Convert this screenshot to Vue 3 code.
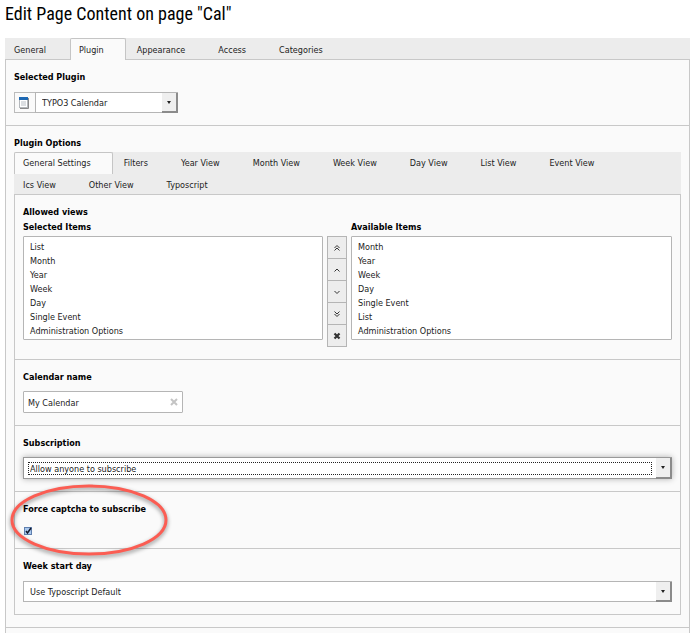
<script setup>
import { ref } from 'vue'

const tabs = ['General', 'Plugin', 'Appearance', 'Access', 'Categories']
const activeTab = ref('Plugin')

const optionTabs = [
  'General Settings', 'Filters', 'Year View', 'Month View', 'Week View', 'Day View',
  'List View', 'Event View', 'Ics View', 'Other View', 'Typoscript'
]
const activeOptionTab = ref('General Settings')

const selectedItems = ['List', 'Month', 'Year', 'Week', 'Day', 'Single Event', 'Administration Options']
const availableItems = ['Month', 'Year', 'Week', 'Day', 'Single Event', 'List', 'Administration Options']

const moves = [
  { label: 'Move to top', d: 'M2.5 5 5 2.5 7.5 5M2.5 7.5 5 5 7.5 7.5', width: 1 },
  { label: 'Move up', d: 'M2.5 6.5 5 4 7.5 6.5', width: 1 },
  { label: 'Move down', d: 'M2.5 4 5 6.5 7.5 4', width: 1 },
  { label: 'Move to bottom', d: 'M2.5 2.5 5 5 7.5 2.5M2.5 5 5 7.5 7.5 5', width: 1 },
  { label: 'Remove', d: 'M2.5 2.5 7.5 7.5M7.5 2.5 2.5 7.5', width: 2.2 }
]

const calendarName = ref('My Calendar')
const captcha = ref(true)
</script>

<template>
  <main class="page">
    <h1>Edit Page Content on page "Cal"</h1>

    <nav class="tabs">
      <button
        v-for="t in tabs" :key="t" type="button" class="tab"
        :class="{ active: t === activeTab }" @click="activeTab = t"
      >{{ t }}</button>
    </nav>

    <div class="panel outer">
      <section class="field">
        <label for="plugin">Selected Plugin</label>
        <div class="plugin-row">
          <span class="plugin-icon">
            <svg width="10" height="12" viewBox="0 0 10 12" aria-hidden="true">
              <path d="M1 11.5h8.5V1" fill="none" stroke="#8a8a8a" />
              <rect x="0.5" y="0.5" width="8" height="10" fill="#fff" stroke="#b4b8bc" />
              <rect x="2" y="4" width="5" height="5" fill="#dcdfe2" />
              <rect width="9" height="3" fill="#1d68b3" />
            </svg>
          </span>
          <div class="select-box">
            <select id="plugin"><option>TYPO3 Calendar</option></select>
            <span class="arrow"></span>
          </div>
        </div>
      </section>

      <section class="field">
        <h2>Plugin Options</h2>
        <nav class="tabs inner-tabs">
          <button
            v-for="t in optionTabs" :key="t" type="button" class="tab"
            :class="{ active: t === activeOptionTab }" @click="activeOptionTab = t"
          >{{ t }}</button>
        </nav>

        <div class="panel inner">
          <section class="field">
            <h2>Allowed views</h2>
            <div class="lists">
              <div class="list-col">
                <label for="selected">Selected Items</label>
                <select id="selected" class="list" multiple size="7">
                  <option v-for="i in selectedItems" :key="i">{{ i }}</option>
                </select>
              </div>
              <div class="moves">
                <button v-for="m in moves" :key="m.label" type="button" :aria-label="m.label">
                  <svg width="10" height="10" viewBox="0 0 10 10" aria-hidden="true">
                    <path :d="m.d" fill="none" stroke="#333" :stroke-width="m.width" />
                  </svg>
                </button>
              </div>
              <div class="list-col">
                <label for="available">Available Items</label>
                <select id="available" class="list" multiple size="7">
                  <option v-for="i in availableItems" :key="i">{{ i }}</option>
                </select>
              </div>
            </div>
          </section>

          <section class="field">
            <label for="name">Calendar name</label>
            <div class="text-box">
              <input id="name" v-model="calendarName" type="text">
              <button type="button" aria-label="Clear" @click="calendarName = ''">
                <svg width="8" height="8" viewBox="0 0 8 8" aria-hidden="true">
                  <path d="M1 1 7 7M7 1 1 7" fill="none" stroke="#c4c4c4" stroke-width="2" />
                </svg>
              </button>
            </div>
          </section>

          <section class="field">
            <label for="subscription">Subscription</label>
            <div class="select-box focused">
              <select id="subscription"><option>Allow anyone to subscribe</option></select>
              <span class="focus-ring"></span>
              <span class="arrow"></span>
            </div>
          </section>

          <section class="field captcha">
            <label for="captcha">Force captcha to subscribe</label>
            <div class="check">
              <input id="captcha" v-model="captcha" type="checkbox">
              <svg v-if="captcha" class="tick" width="10" height="10" viewBox="0 0 10 10" aria-hidden="true">
                <path d="M3 5 4.5 7 8 2" fill="none" stroke="#10182c" stroke-width="1.5" />
              </svg>
            </div>
            <svg class="highlight" width="166" height="80" viewBox="0 0 166 80" aria-hidden="true">
              <ellipse cx="81" cy="38" rx="77" ry="34" fill="none" stroke="#fb5d53" stroke-width="3" />
            </svg>
          </section>

          <section class="field">
            <label for="weekstart">Week start day</label>
            <div class="select-box">
              <select id="weekstart"><option>Use Typoscript Default</option></select>
              <span class="arrow"></span>
            </div>
          </section>
        </div>
      </section>
      <div class="rest"></div>
    </div>
  </main>
</template>

<style>
body {
  background: #fff;
}
</style>

<style scoped>
.page {
  padding: 0 4px 0 5px;
  color: #222;
  font: 9px/14px "DejaVu Sans Condensed", "DejaVu Sans", Verdana, sans-serif;
}
.page * {
  box-sizing: border-box;
}
button, input, select {
  margin: 0;
  color: inherit;
  font: inherit;
}
h1 {
  margin: 0;
  padding: 2px 0 12px;
  color: #000;
  font: 400 18px/24px "Roboto Condensed", "Liberation Sans Narrow", Roboto, sans-serif;
}
h2, label {
  display: block;
  margin: 0;
  color: #000;
  font-weight: bold;
  font-size: 9px;
  line-height: 14px;
}

.tabs {
  display: flex;
  flex-wrap: wrap;
  column-gap: 2px;
  background: #ececec;
}
.tab {
  position: relative;
  height: 22px;
  padding: 0 21px 0 8px;
  border: 1px solid transparent;
  border-bottom: 0;
  background: none;
}
.tab.active {
  z-index: 1;
  border-color: #c5c5c5;
  border-radius: 2px 2px 0 0;
  background: #fafafa;
}
.panel {
  position: relative;
  margin-top: -1px;
  border: 1px solid #c8c8c8;
  background: #fafafa;
}
.outer {
  border-bottom: 0;
}
.inner-tabs {
  margin-top: 2px;
}
.inner-tabs .tab {
  padding-bottom: 2px;
}
.inner-tabs + .inner {
  margin-top: -2px;
}

.field {
  padding: 10px 8px 12px;
  border-bottom: 1px solid #c8c8c8;
}
.inner > .field:last-child {
  border-bottom: 0;
}
.field > label {
  margin-bottom: 7px;
}
.rest {
  height: 5px;
}

.plugin-row {
  display: flex;
  width: 164px;
  margin-top: 8px;
}
.field > label:has(+ .plugin-row),
.field > label:has(+ .select-box) {
  margin-bottom: 0;
}
.plugin-icon {
  display: flex;
  align-items: center;
  justify-content: center;
  width: 21px;
  padding-right: 2px;
  border: 1px solid #bbb;
  border-right: 0;
}
.select-box {
  position: relative;
  height: 21px;
  margin-top: 8px;
}
.plugin-row .select-box {
  flex: 1;
  margin-top: 0;
}
.select-box.focused {
  height: 22px;
  margin-top: 7px;
  box-shadow: 0 0 6px rgba(0, 0, 0, 0.3);
}
.select-box select {
  display: block;
  width: 100%;
  height: 100%;
  padding: 1px 24px 0 6px;
  border: 1px solid #b5b5b5;
  border-radius: 0;
  outline: 0;
  background: #fff;
  appearance: none;
}
.select-box.focused select {
  padding-top: 2px;
  border-color: #999;
}
.arrow {
  position: absolute;
  top: 1px;
  right: 0;
  bottom: 0;
  display: flex;
  align-items: center;
  justify-content: center;
  width: 16px;
  border-right: 2px solid #8b8b8b;
  border-bottom: 2px solid #8b8b8b;
  background: #efefef;
  pointer-events: none;
}
.arrow::after {
  border: 2px solid transparent;
  border-top: 3px solid #222;
  border-bottom: 0;
  content: "";
}
.focus-ring {
  position: absolute;
  inset: 5px 20px 4px 5px;
  border: 1px dotted #222;
  pointer-events: none;
}

.lists {
  display: grid;
  grid-template-columns: 300fr 20px 321fr;
  column-gap: 4px;
  margin-top: 1px;
}
.list-col {
  display: flex;
  flex-direction: column;
  gap: 2px;
}
.list {
  width: 100%;
  height: 104px;
  padding: 5px 6px 0;
  border: 1px solid #b5b5b5;
  border-radius: 1px;
  outline: 0;
  background: #fff;
  overflow: hidden;
}
.list option {
  height: 14px;
  min-height: 14px;
  padding: 0;
  line-height: 14px;
}
.moves {
  display: flex;
  flex-direction: column;
  margin-top: 16px;
  border: 1px solid #b5b5b5;
  border-top: 0;
}
.moves button {
  display: flex;
  align-items: center;
  justify-content: center;
  height: 22px;
  padding: 0;
  border: 0;
  border-top: 1px solid #b5b5b5;
  background: #ededed;
}

.text-box {
  display: flex;
  width: 160px;
  height: 22px;
  border: 1px solid #b5b5b5;
  border-radius: 1px;
  background: #fff;
}
.text-box input {
  flex: 1;
  min-width: 0;
  padding: 2px 4px 0;
  border: 0;
  outline: 0;
  background: none;
}
.text-box button {
  display: flex;
  align-items: center;
  padding: 0 4px;
  border: 0;
  background: none;
}

.captcha {
  position: relative;
}
.check {
  position: relative;
  display: flex;
  align-items: flex-end;
  height: 13px;
}
.check input {
  width: 8px;
  height: 8px;
  margin: 0 0 1px 1px;
  border: 1px solid #5f7fae;
  background: #a9c8ee;
  appearance: none;
}
.tick {
  position: absolute;
  bottom: 0;
  left: 0;
  pointer-events: none;
}
.highlight {
  position: absolute;
  top: -10px;
  left: -7px;
  overflow: visible;
  filter: drop-shadow(0 2px 2px rgba(0, 0, 0, 0.45));
  pointer-events: none;
}
</style>
